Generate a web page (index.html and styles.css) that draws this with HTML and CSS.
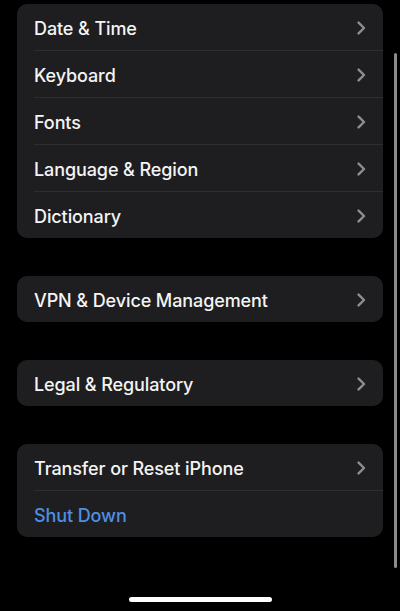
FILE: index.html
```html
<!DOCTYPE html>
<html>
<head lang="en">
    <meta charset="UTF-8">
    <title>General</title>
    <link rel="stylesheet" href="styles.css">
</head>
<body>
    <div class="page">
        <ul class="group">
            <li class="row"><span class="label">Date &amp; Time</span><svg class="chev" width="9" height="14" viewBox="0 0 9 14"><polyline points="1.6,1.6 7,7 1.6,12.4"/></svg></li>
            <li class="row"><span class="label">Keyboard</span><svg class="chev" width="9" height="14" viewBox="0 0 9 14"><polyline points="1.6,1.6 7,7 1.6,12.4"/></svg></li>
            <li class="row"><span class="label">Fonts</span><svg class="chev" width="9" height="14" viewBox="0 0 9 14"><polyline points="1.6,1.6 7,7 1.6,12.4"/></svg></li>
            <li class="row"><span class="label">Language &amp; Region</span><svg class="chev" width="9" height="14" viewBox="0 0 9 14"><polyline points="1.6,1.6 7,7 1.6,12.4"/></svg></li>
            <li class="row"><span class="label">Dictionary</span><svg class="chev" width="9" height="14" viewBox="0 0 9 14"><polyline points="1.6,1.6 7,7 1.6,12.4"/></svg></li>
        </ul>
        <ul class="group">
            <li class="row"><span class="label">VPN &amp; Device Management</span><svg class="chev" width="9" height="14" viewBox="0 0 9 14"><polyline points="1.6,1.6 7,7 1.6,12.4"/></svg></li>
        </ul>
        <ul class="group">
            <li class="row"><span class="label">Legal &amp; Regulatory</span><svg class="chev" width="9" height="14" viewBox="0 0 9 14"><polyline points="1.6,1.6 7,7 1.6,12.4"/></svg></li>
        </ul>
        <ul class="group">
            <li class="row"><span class="label">Transfer or Reset iPhone</span><svg class="chev" width="9" height="14" viewBox="0 0 9 14"><polyline points="1.6,1.6 7,7 1.6,12.4"/></svg></li>
            <li class="row"><span class="label action">Shut Down</span></li>
        </ul>
    </div>
    <div class="scrollbar"></div>
    <div class="home-bar"></div>
</body>
</html>
```

FILE: styles.css
```css
* {
    margin: 0;
    padding: 0;
    box-sizing: border-box;
}
html, body {
    width: 400px;
    height: 611px;
    background: #000;
    overflow: hidden;
}
body {
    position: relative;
    font-family: Inter, "Noto Sans", sans-serif;
    color: #f4f4f5;
}
.page {
    display: flex;
    flex-direction: column;
    gap: 38px;
    padding: 4px 17px 0 17px;
}
.group {
    list-style-type: none;
    background: #1e1e20;
    border-radius: 10px;
    overflow: hidden;
}
.row {
    box-sizing: content-box;
    display: flex;
    align-items: center;
    justify-content: space-between;
    height: 46px;
    margin-left: 17px;
    padding-right: 17px;
    border-top: 1px solid #2e2e30;
}
.row:first-child {
    border-top: none;
}
.label {
    font-size: 18px;
    font-weight: 500;
    letter-spacing: -0.1px;
    padding-top: 2px;
}
.label.action {
    color: #4e8fe2;
}
.chev {
    margin-top: 2px;
    fill: none;
    stroke: #8e8e92;
    stroke-width: 2.4;
    stroke-linecap: round;
    stroke-linejoin: round;
}
.scrollbar {
    position: absolute;
    left: 394px;
    top: 53px;
    width: 3px;
    height: 515px;
    border-radius: 2px;
    background: #8c8c8c;
}
.home-bar {
    position: absolute;
    left: 129px;
    top: 597px;
    width: 143px;
    height: 5px;
    border-radius: 3px;
    background: #fff;
}
```
